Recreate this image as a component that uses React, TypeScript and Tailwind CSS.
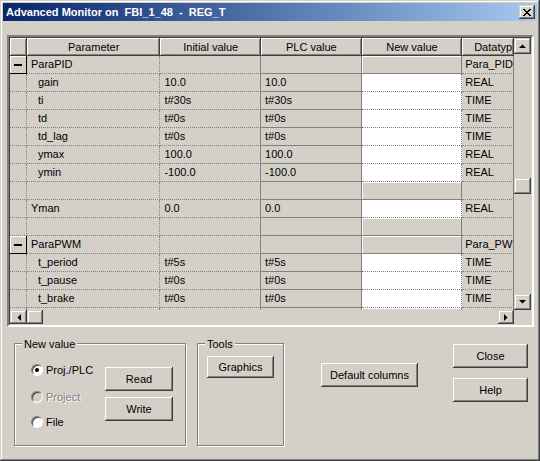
import React from 'react';

type Row = {
  kind: 'group' | 'item' | 'blank';
  name?: string;
  init?: string;
  plc?: string;
  type?: string;
  indent?: boolean;
};

const rows: Row[] = [
  { kind: 'group', name: 'ParaPID', type: 'Para_PID' },
  { kind: 'item', name: 'gain', init: '10.0', plc: '10.0', type: 'REAL', indent: true },
  { kind: 'item', name: 'ti', init: 't#30s', plc: 't#30s', type: 'TIME', indent: true },
  { kind: 'item', name: 'td', init: 't#0s', plc: 't#0s', type: 'TIME', indent: true },
  { kind: 'item', name: 'td_lag', init: 't#0s', plc: 't#0s', type: 'TIME', indent: true },
  { kind: 'item', name: 'ymax', init: '100.0', plc: '100.0', type: 'REAL', indent: true },
  { kind: 'item', name: 'ymin', init: '-100.0', plc: '-100.0', type: 'REAL', indent: true },
  { kind: 'blank' },
  { kind: 'item', name: 'Yman', init: '0.0', plc: '0.0', type: 'REAL' },
  { kind: 'blank' },
  { kind: 'group', name: 'ParaPWM', type: 'Para_PWM' },
  { kind: 'item', name: 't_period', init: 't#5s', plc: 't#5s', type: 'TIME', indent: true },
  { kind: 'item', name: 't_pause', init: 't#0s', plc: 't#0s', type: 'TIME', indent: true },
  { kind: 'item', name: 't_brake', init: 't#0s', plc: 't#0s', type: 'TIME', indent: true },
  { kind: 'blank' },
];

const font = "font-['Liberation_Sans',Arial,sans-serif] text-[11px]";
const raised =
  'shadow-[inset_-1px_-1px_#404040,inset_1px_1px_#ffffff,inset_-2px_-2px_#808080]';
const scrollBtn =
  'shadow-[inset_-1px_-1px_#404040,inset_1px_1px_#d4d0c8,inset_-2px_-2px_#808080,inset_2px_2px_#ffffff]';
const headCell =
  'shadow-[inset_-1px_-1px_#404040,inset_1px_1px_#ffffff,inset_-2px_-2px_#808080]';
const dotted = 'border-r border-b border-dotted border-[#808080]';

const Arrow = ({ dir }: { dir: 'up' | 'down' | 'left' | 'right' }) => {
  const pts = {
    up: '0,4 7,4 3.5,0.5',
    down: '0,0 7,0 3.5,3.5',
    left: '4,0 4,7 0.5,3.5',
    right: '0,0 0,7 3.5,3.5',
  }[dir];
  const vert = dir === 'up' || dir === 'down';
  return (
    <svg width={vert ? 7 : 4} height={vert ? 4 : 7} viewBox={vert ? '0 0 7 4' : '0 0 4 7'}>
      <polygon points={pts} fill="#000" />
    </svg>
  );
};

const Button = ({ label, className }: { label: string; className: string }) => (
  <div className={`flex items-center justify-center bg-[#d4d0c8] text-black ${raised} ${className}`}>
    {label}
  </div>
);

const Radio = ({ checked, disabled }: { checked?: boolean; disabled?: boolean }) => (
  <span
    className={`relative flex h-[12px] w-[12px] shrink-0 items-center justify-center rounded-full border border-[#808080] border-b-white border-r-white shadow-[inset_1px_1px_#404040] ${
      disabled ? 'bg-[#d4d0c8]' : 'bg-white'
    }`}
  >
    {checked && <span className="h-[4px] w-[4px] rounded-full bg-black" />}
  </span>
);

const GridRow = ({ row }: { row: Row }) => {
  const whiteNew = row.kind === 'item';
  return (
    <div className="flex h-[18px] shrink-0">
      {row.kind === 'group' ? (
        <div className="flex w-[17px] items-center justify-center bg-[#d4d0c8] shadow-[inset_-1px_-1px_#000000,inset_1px_1px_#ffffff]">
          <span className="h-[2px] w-[8px] bg-black" />
        </div>
      ) : (
        <div className={`w-[17px] bg-[#d4d0c8] ${dotted}`} />
      )}
      <div className={`w-[134px] truncate leading-[17px] ${row.indent ? 'pl-[11px]' : 'pl-[4px]'} ${dotted}`}>
        {row.name}
      </div>
      <div className={`w-[101px] truncate pl-[4px] leading-[17px] ${dotted} [border-right-style:solid]`}>
        {row.init}
      </div>
      <div className={`w-[101px] truncate pl-[4px] leading-[17px] ${dotted} [border-right-style:solid] [border-bottom-style:solid]`}>
        {row.plc}
      </div>
      {whiteNew ? (
        <div className={`w-[101px] bg-white ${dotted}`} />
      ) : (
        <div className="w-[101px] border-b border-r border-[#808080] bg-[#d4d0c8] shadow-[inset_1px_1px_#ffffff]" />
      )}
      <div className={`w-[52px] overflow-hidden whitespace-nowrap pl-[3px] leading-[17px] ${dotted} [border-right-style:solid]`}>
        {row.type}
      </div>
    </div>
  );
};

export default function App() {
  const headers = [
    { label: '', w: 'w-[17px]' },
    { label: 'Parameter', w: 'w-[134px]' },
    { label: 'Initial value', w: 'w-[101px]' },
    { label: 'PLC value', w: 'w-[101px]' },
    { label: 'New value', w: 'w-[101px]' },
    { label: 'Datatyp', w: 'w-[52px]' },
  ];

  return (
    <div
      className={`flex h-[461px] w-[540px] flex-col overflow-hidden bg-[#d4d0c8] text-black ${font} shadow-[inset_-1px_-1px_#404040,inset_1px_1px_#d4d0c8,inset_-2px_-2px_#808080,inset_2px_2px_#ffffff]`}
    >
      {/* title bar */}
      <div className="mx-[3px] mt-[3px] flex h-[18px] shrink-0 items-center bg-gradient-to-r from-[#0a246a] to-[#a6caf0] pl-[3px] pr-[2px]">
        <span className="flex-1 whitespace-pre text-[11px] font-bold text-white">
          {'Advanced Monitor on  FBI_1_48  -  REG_T'}
        </span>
        <div className={`flex h-[14px] w-[16px] items-center justify-center bg-[#d4d0c8] ${scrollBtn}`}>
          <svg width="8" height="7" viewBox="0 0 8 7" shapeRendering="crispEdges">
            <path d="M0 0h2v1h-2zM6 0h2v1h-2zM1 1h2v1h-2zM5 1h2v1h-2zM2 2h4v1h-4zM3 3h2v1h-2zM2 4h4v1h-4zM1 5h2v1h-2zM5 5h2v1h-2zM0 6h2v1h-2zM6 6h2v1h-2z" fill="#000" />
          </svg>
        </div>
      </div>

      {/* grid */}
      <div className="ml-[7px] mt-[14px] flex h-[292px] w-[527px] shrink-0 flex-col border-2 border-[#808080] border-b-white border-r-white">
        <div className="flex h-full flex-col border border-[#404040] border-b-[#d4d0c8] border-r-[#d4d0c8]">
          <div className="flex h-[272px]">
            <div className="flex w-[506px] flex-col overflow-hidden">
              <div className="flex h-[18px] shrink-0">
                {headers.map((h, i) => (
                  <div
                    key={i}
                    className={`${h.w} flex items-center overflow-hidden whitespace-nowrap bg-[#d4d0c8] ${headCell} ${
                      i === 5 ? 'justify-end pr-[2px]' : 'justify-center'
                    }`}
                  >
                    {h.label}
                  </div>
                ))}
              </div>
              {rows.map((r, i) => (
                <GridRow key={i} row={r} />
              ))}
            </div>
            <div className="flex w-[17px] flex-col bg-[#d4d0c8]">
              <div className={`flex h-[16px] items-center justify-center ${scrollBtn}`}>
                <Arrow dir="up" />
              </div>
              <div className={`mt-[124px] h-[16px] ${scrollBtn}`} />
              <div className={`mt-auto flex h-[16px] items-center justify-center ${scrollBtn}`}>
                <Arrow dir="down" />
              </div>
            </div>
          </div>
          <div className="flex h-[16px]">
            <div className={`flex w-[17px] items-center justify-center ${scrollBtn}`}>
              <Arrow dir="left" />
            </div>
            <div className={`w-[16px] ${scrollBtn}`} />
            <div className="flex-1" />
            <div className={`flex w-[16px] items-center justify-center ${scrollBtn}`}>
              <Arrow dir="right" />
            </div>
            <div className="w-[17px]" />
          </div>
        </div>
      </div>

      {/* bottom area */}
      <div className="ml-[14px] mt-[16px] flex items-start">
        <div className="relative h-[103px] w-[172px] border border-[#808080] shadow-[1px_1px_#ffffff,inset_1px_1px_#ffffff]">
          <span className="absolute -top-[8px] left-[7px] bg-[#d4d0c8] px-[2px]">New value</span>
          <div className="flex">
            <div className="flex w-[90px] shrink-0 flex-col pl-[16px] pt-[19px]">
              <div className="flex h-[14px] items-center gap-[3px]">
                <Radio checked />
                <span>Proj./PLC</span>
              </div>
              <div className="mt-[13px] flex h-[14px] items-center gap-[3px]">
                <Radio disabled />
                <span className="text-[#808080] [text-shadow:1px_1px_#ffffff]">Project</span>
              </div>
              <div className="mt-[11px] flex h-[14px] items-center gap-[3px]">
                <Radio />
                <span>File</span>
              </div>
            </div>
            <div className="flex flex-col pt-[23px]">
              <Button label="Read" className="h-[24px] w-[68px]" />
              <Button label="Write" className="mt-[6px] h-[24px] w-[68px]" />
            </div>
          </div>
        </div>

        <div className="relative ml-[11px] h-[103px] w-[87px] border border-[#808080] shadow-[1px_1px_#ffffff,inset_1px_1px_#ffffff]">
          <span className="absolute -top-[8px] left-[7px] bg-[#d4d0c8] px-[2px]">Tools</span>
          <Button label="Graphics" className="ml-[9px] mt-[12px] h-[22px] w-[67px]" />
        </div>

        <Button label="Default columns" className="ml-[37px] mt-[20px] h-[24px] w-[97px]" />

        <div className="ml-[35px] mt-[1px] flex flex-col">
          <Button label="Close" className="h-[24px] w-[75px]" />
          <Button label="Help" className="mt-[10px] h-[24px] w-[75px]" />
        </div>
      </div>
    </div>
  );
}
